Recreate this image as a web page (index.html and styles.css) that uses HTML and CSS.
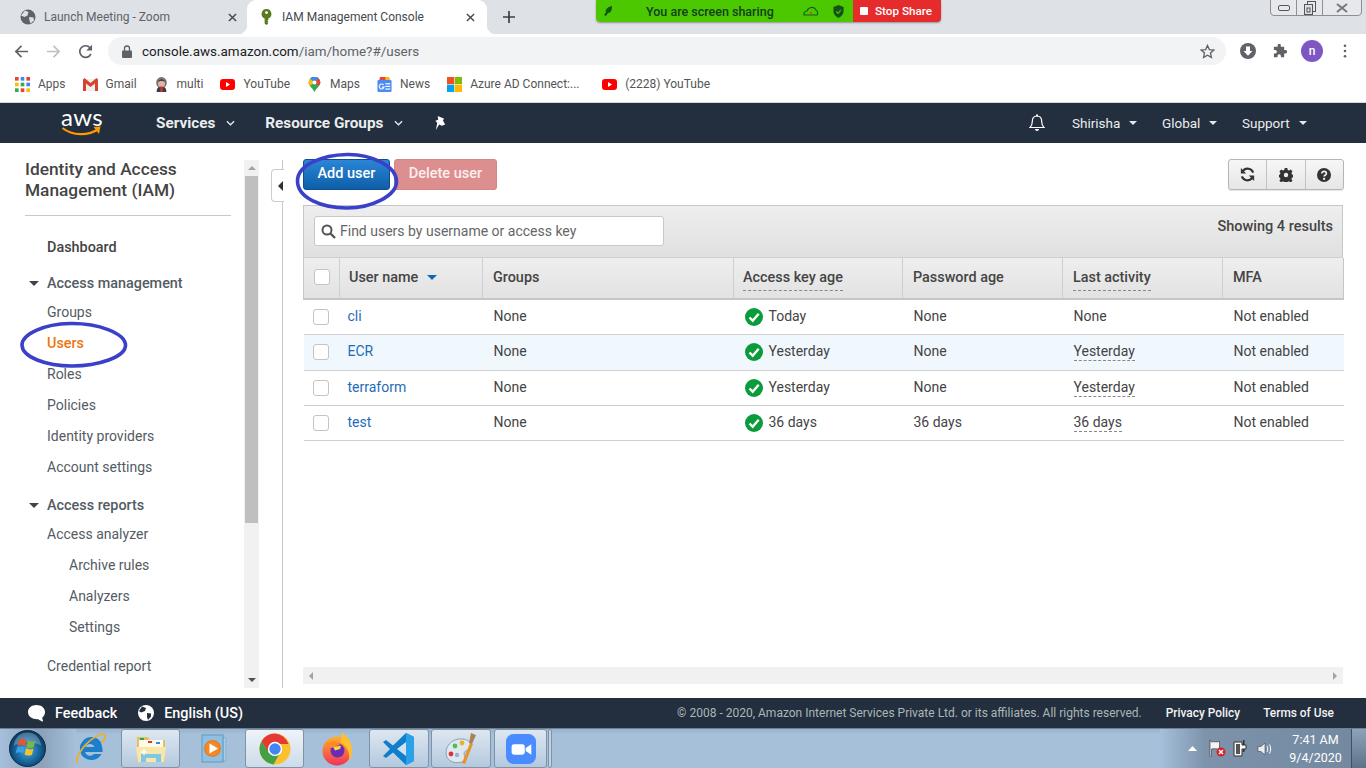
FILE: index.html
```html
<!DOCTYPE html>
<html lang="en">
<head>
<meta charset="utf-8">
<title>IAM Management Console</title>
<link rel="stylesheet" href="styles.css">
</head>
<body>
<div class="screen">

  <header class="tabstrip">
    <div class="tab">
      <svg class="tab-ico" viewBox="0 0 16 16"><circle cx="8" cy="8" r="7.500" fill="#5f6368"/><path d="M5 1.500l3.500 1.500-1 3.500-3 1.500L1 6.500zM9 8l4.500.5.500 3-3.500 3-1-3z" fill="#dee1e6"/></svg>
      <span class="tab-title">Launch Meeting - Zoom</span>
      <svg class="tab-x" viewBox="0 0 10 10"><path d="M1 1l8 8M9 1l-8 8" stroke="#45494d" stroke-width="1.600"/></svg>
    </div>
    <div class="tab tab-active">
      <svg class="tab-ico tab-key" viewBox="0 0 11 17"><path d="M5.500 0a5.200 5.200 0 0 1 2 10v1.500l-1 1 1 1-1 1 1 1-2 1.500-2-1.500V10a5.200 5.200 0 0 1 2-10z" fill="#5b7a1e"/><circle cx="5.500" cy="3.800" r="1.500" fill="#fff"/></svg>
      <span class="tab-title">IAM Management Console</span>
      <svg class="tab-x" viewBox="0 0 10 10"><path d="M1 1l8 8M9 1l-8 8" stroke="#45494d" stroke-width="1.600"/></svg>
    </div>
    <svg class="tab-new" viewBox="0 0 12 12"><path d="M6 0v12M0 6h12" stroke="#3c4043" stroke-width="1.700"/></svg>
  </header>

  <div class="winctl">
    <span class="winbtn"><svg viewBox="0 0 12 6" width="12" height="6"><rect x="0.500" y="0.500" width="11" height="5" rx="1.500" fill="none" stroke="#555"/></svg></span>
    <span class="winbtn"><svg viewBox="0 0 12 14" width="12" height="14"><rect x="3.500" y="0.500" width="8" height="10" fill="none" stroke="#555"/><rect x="0.500" y="3.500" width="8" height="10" fill="#dee1e6" stroke="#555"/><rect x="3" y="7" width="3" height="4" fill="none" stroke="#555"/></svg></span>
    <span class="winbtn winbtn-close"><svg viewBox="0 0 12 10" width="12" height="10"><path d="M1 1l10 8M11 1L1 9" stroke="#777" stroke-width="2"/></svg></span>
  </div>

  <div class="sharebar">
    <div class="share-green">
      <svg class="share-leaf" viewBox="0 0 10 10"><path d="M9 0C4 1 2 4 3 6L1 9l2 1 2-3c3 0 4-3 4-7z" fill="#0d5a0d"/></svg>
      <span class="share-text">You are screen sharing</span>
      <svg class="share-cloud" viewBox="0 0 16 12"><path d="M1 10c-.5-2 1-4 3-4 1-4 7-5 9-1 2 1 2 4 1 5z" fill="none" stroke="#14611a" stroke-width="1.200"/><circle cx="8" cy="8" r="1" fill="#e33"/></svg>
      <svg class="share-shield" viewBox="0 0 12 14"><path d="M6 0l5.500 2v5c0 3-2.500 5.500-5.500 7C3 12.500.5 10 .5 7V2z" fill="#14501a"/><path d="M3.500 7l2 2 3-3.500" stroke="#4bc800" stroke-width="1.300" fill="none"/></svg>
    </div>
    <div class="share-red"><span class="share-stop"></span><span>Stop Share</span></div>
  </div>

  <div class="toolbar">
    <svg class="tb-ico" viewBox="0 0 16 16"><path d="M15 8H2M8 2L2 8l6 6" fill="none" stroke="#5f6368" stroke-width="1.800"/></svg>
    <svg class="tb-ico" viewBox="0 0 16 16"><path d="M1 8h13M8 2l6 6-6 6" fill="none" stroke="#bdc1c6" stroke-width="1.800"/></svg>
    <svg class="tb-ico" viewBox="0 0 16 16"><path d="M13.800 10.500A6.200 6.200 0 1 1 12.800 4" fill="none" stroke="#5f6368" stroke-width="1.800"/><path d="M15 .8v6.200H8.800z" fill="#5f6368"/></svg>
    <div class="omnibox">
      <svg class="lock" viewBox="0 0 10 13"><path d="M2.500 6V3.500a2.500 2.500 0 0 1 5 0V6" fill="none" stroke="#5f6368" stroke-width="1.300"/><rect y="5.500" width="10" height="7.500" rx="1" fill="#5f6368"/></svg>
      <span class="url">console.aws.amazon.com<span class="url-path">/iam/home?#/users</span></span>
      <svg class="star" viewBox="0 0 16 16"><path d="M8 1.500l2 4.400 4.800.5-3.600 3.200 1 4.700L8 11.900l-4.200 2.400 1-4.700L1.200 6.400 6 5.900z" fill="none" stroke="#5f6368" stroke-width="1.400"/></svg>
    </div>
    <svg class="ext-down" viewBox="0 0 16 16"><circle cx="8" cy="8" r="8" fill="#5f6368"/><path d="M6 3.500h4V8h2.500L8 12.800 3.500 8H6z" fill="#fff"/></svg>
    <svg class="ext-puzzle" viewBox="0 0 16 16"><path d="M6 1.500a1.700 1.700 0 0 1 3.400 0V3H13v3.500h1.300a1.800 1.800 0 0 1 0 3.600H13V14H9.500v-1.300a1.800 1.800 0 0 0-3.600 0V14H2v-3.800h1.300a1.900 1.900 0 0 0 0-3.800H2V3h4z" fill="#5f6368"/></svg>
    <span class="avatar">n</span>
    <svg class="kebab" viewBox="0 0 4 16"><circle cx="2" cy="2" r="1.500" fill="#5f6368"/><circle cx="2" cy="8" r="1.500" fill="#5f6368"/><circle cx="2" cy="14" r="1.500" fill="#5f6368"/></svg>
  </div>

  <nav class="bookmarks">
    <a class="bm">
      <svg class="bm-ico" viewBox="0 0 14 14"><g><rect width="3.400" height="3.400" fill="#ea4335"/><rect x="5.300" width="3.400" height="3.400" fill="#4285f4"/><rect x="10.600" width="3.400" height="3.400" fill="#ea4335"/><rect y="5.300" width="3.400" height="3.400" fill="#fbbc04"/><rect x="5.300" y="5.300" width="3.400" height="3.400" fill="#34a853"/><rect x="10.600" y="5.300" width="3.400" height="3.400" fill="#4285f4"/><rect y="10.600" width="3.400" height="3.400" fill="#34a853"/><rect x="5.300" y="10.600" width="3.400" height="3.400" fill="#ea4335"/><rect x="10.600" y="10.600" width="3.400" height="3.400" fill="#fbbc04"/></g></svg>
      <span>Apps</span></a>
    <a class="bm">
      <svg class="bm-ico" viewBox="0 0 15 13"><rect x="1" y="1" width="13" height="12" fill="#f0eeee"/><path d="M0 1.500V13h3V5.500l4.500 3.500L12 5.500V13h3V1.500L13.500 0 7.500 5 1.500 0z" fill="#d4452f"/></svg>
      <span>Gmail</span></a>
    <a class="bm">
      <svg class="bm-ico" viewBox="0 0 15 17"><ellipse cx="7.500" cy="6.500" rx="6" ry="6.500" fill="#7b6a6a"/><ellipse cx="7.500" cy="7" rx="4" ry="5" fill="#dcb6a2"/><path d="M3.500 6c0-5 8-5 8 0-2-2-6-2-8 0z" fill="#45414a"/><path d="M2 17c0-5 2-6 5.500-6S13 12 13 17z" fill="#3d3b44"/><rect x="6.300" y="11" width="2.400" height="6" fill="#d33"/></svg>
      <span>multi</span></a>
    <a class="bm">
      <svg class="bm-ico" viewBox="0 0 15 15"><rect y="2" width="15" height="11" rx="3" fill="#f00"/><path d="M6 5l4 2.500L6 10z" fill="#fff"/></svg>
      <span>YouTube</span></a>
    <a class="bm">
      <svg class="bm-ico" viewBox="0 0 14 18"><path d="M7 18C5 13 0 11 0 6.500a7 7 0 0 1 14 0C14 11 9 13 7 18z" fill="#34a853"/><path d="M2 2L7 6.500 12 1.800A7 7 0 0 0 2 2z" fill="#4285f4"/><path d="M0 6.500C0 8 .6 9 1.500 10.500L7 6.500 2 2A7 7 0 0 0 0 6.500z" fill="#fbbc04"/><path d="M12 1.800L7 6.500l5 4C13.300 9 14 8 14 6.500a7 7 0 0 0-2-4.700z" fill="#ea4335"/><circle cx="7" cy="6.500" r="2.400" fill="#fff"/></svg>
      <span>Maps</span></a>
    <a class="bm">
      <svg class="bm-ico" viewBox="0 0 16 17"><path d="M2 4l1-4h10l1 4z" fill="#ea4335"/><path d="M9 0h4l1 4H9z" fill="#fbbc04"/><rect y="3.500" width="16" height="13.500" rx="1.500" fill="#4a8af4"/><rect x="9" y="7" width="5.500" height="1.300" fill="#fff"/><rect x="9" y="10" width="5.500" height="1.300" fill="#fff"/><rect x="9" y="13" width="5.500" height="1.300" fill="#fff"/><path d="M7 9a2.800 2.800 0 1 0 .5 2.500H5" fill="none" stroke="#fff" stroke-width="1.200"/></svg>
      <span>News</span></a>
    <a class="bm bm-azure">
      <svg class="bm-ico" viewBox="0 0 16 16"><rect width="7.700" height="7.700" fill="#f25022"/><rect x="8.300" width="7.700" height="7.700" fill="#7fba00"/><rect y="8.300" width="7.700" height="7.700" fill="#00a4ef"/><rect x="8.300" y="8.300" width="7.700" height="7.700" fill="#ffb900"/></svg>
      <span>Azure AD Connect:...</span></a>
    <a class="bm">
      <svg class="bm-ico" viewBox="0 0 15 15"><rect y="2" width="15" height="11" rx="3" fill="#f00"/><path d="M6 5l4 2.500L6 10z" fill="#fff"/></svg>
      <span>(2228) YouTube</span></a>
  </nav>

  <div class="awsnav">
    <div class="awslogo">
      <span class="awslogo-text">aws</span>
      <svg class="awslogo-smile" viewBox="0 0 40 11"><path d="M1 2c10 8 26 8 36 1" fill="none" stroke="#f90" stroke-width="2.200"/><path d="M32 1l7-.5L37.500 8z" fill="#f90"/></svg>
    </div>
    <a class="navmenu navmenu-services">Services<svg class="chev" viewBox="0 0 10 6"><path d="M1 1l4 4 4-4" fill="none" stroke="#e5e7e9" stroke-width="1.500"/></svg></a>
    <a class="navmenu navmenu-groups">Resource Groups<svg class="chev" viewBox="0 0 10 6"><path d="M1 1l4 4 4-4" fill="none" stroke="#e5e7e9" stroke-width="1.500"/></svg></a>
    <svg class="navpin" viewBox="0 0 14 16"><path d="M4 0l7 3-1.500 1.500L12 9 8.500 10.500 5.500 9 2 15 3.500 7.500 1.500 5l3-1z" fill="#fff"/></svg>
    <span class="navspacer"></span>
    <svg class="navbell" viewBox="0 0 16 18"><path d="M8 2c-3.500 0-4.700 2.500-4.700 5.500 0 3-1 4.700-2.300 6h14c-1.300-1.300-2.300-3-2.300-6C12.700 4.500 11.500 2 8 2z" fill="none" stroke="#fff" stroke-width="1.200"/><rect x="7" y="0.500" width="2" height="2" fill="#fff"/><path d="M6 15h4c0 2.500-4 2.500-4 0z" fill="#fff"/></svg>
    <a class="navright navright-user">Shirisha<span class="caret"></span></a>
    <a class="navright navright-global">Global<span class="caret"></span></a>
    <a class="navright">Support<span class="caret"></span></a>
  </div>

  <div class="console">
    <aside class="sidebar">
      <div class="sidenav">
        <h1 class="side-title">Identity and Access Management (IAM)</h1>
        <a class="side-dash">Dashboard</a>
        <div class="side-group"><span class="side-caret"></span>Access management</div>
        <a class="side-link side-link-first">Groups</a>
        <a class="side-link side-active">Users</a>
        <a class="side-link">Roles</a>
        <a class="side-link">Policies</a>
        <a class="side-link">Identity providers</a>
        <a class="side-link">Account settings</a>
        <div class="side-group side-group-2"><span class="side-caret"></span>Access reports</div>
        <a class="side-link side-link-first">Access analyzer</a>
        <a class="side-link side-sub">Archive rules</a>
        <a class="side-link side-sub">Analyzers</a>
        <a class="side-link side-sub">Settings</a>
        <a class="side-link side-cred">Credential report</a>
      </div>
      <div class="vscroll">
        <span class="vs-arrow vs-up"></span>
        <span class="vs-thumb"></span>
        <span class="vs-arrow vs-down"></span>
      </div>
    </aside>

    <main class="main">
      <div class="collapse"><span class="collapse-arrow"></span></div>
      <div class="actions">
        <button class="btn btn-primary">Add user</button>
        <button class="btn btn-danger">Delete user</button>
        <span class="actions-spacer"></span>
        <div class="btngroup">
          <span class="gbtn"><svg viewBox="0 0 14 14" width="15" height="15"><path d="M12.300 5.200A5.600 5.600 0 0 0 2.800 3.500M1.700 8.800a5.600 5.600 0 0 0 9.500 1.700" fill="none" stroke="#333" stroke-width="2"/><path d="M.8 1v5h5zM13.200 13V8h-5z" fill="#333"/></svg></span>
          <span class="gbtn"><svg viewBox="0 0 14 14" width="14" height="14"><path d="M5.700 0h2.600l.4 2 1.300.6 1.800-1 1.700 1.800-1.100 1.700.6 1.400 2 .3v2.400l-2 .4-.6 1.300 1.100 1.800-1.700 1.700-1.800-1.100-1.300.6-.4 2H5.700l-.4-2-1.400-.6-1.700 1.100L.4 12.700l1.100-1.800-.6-1.300-1.900-.4V6.800l1.900-.3.600-1.400-1.100-1.700 1.800-1.800 1.700 1 1.400-.6z" fill="#333"/><circle cx="7" cy="7" r="2.200" fill="#eee"/></svg></span>
          <span class="gbtn"><svg viewBox="0 0 14 14" width="14" height="14"><circle cx="7" cy="7" r="7" fill="#333"/><path d="M4.800 5.400C4.800 2.600 9.400 2.600 9.400 5.400c0 1.800-2.300 1.800-2.300 3.200" fill="none" stroke="#eee" stroke-width="1.700"/><rect x="6.100" y="9.800" width="2" height="2" fill="#eee"/></svg></span>
        </div>
      </div>

      <section class="panel">
        <div class="filterbar">
          <div class="search">
            <svg class="search-ico" viewBox="0 0 15 15"><circle cx="6" cy="6" r="4.500" fill="none" stroke="#555" stroke-width="2"/><path d="M9.500 9.500l4.500 4.500" stroke="#555" stroke-width="2.400"/></svg>
            <span>Find users by username or access key</span>
          </div>
          <span class="results">Showing 4 results</span>
        </div>
        <table class="users">
          <colgroup>
            <col class="col-check"><col class="col-name"><col class="col-groups"><col class="col-key"><col class="col-pass"><col class="col-last"><col class="col-mfa">
          </colgroup>
          <thead>
            <tr>
              <th class="cell-check"><span class="cbox"></span></th>
              <th class="th-tight">User name<span class="sort"></span></th>
              <th>Groups</th>
              <th class="th-tight"><span class="dash">Access key age</span></th>
              <th>Password age</th>
              <th><span class="dash">Last activity</span></th>
              <th>MFA</th>
            </tr>
          </thead>
          <tbody>
            <tr>
              <td class="cell-check"><span class="cbox"></span></td>
              <td class="td-name"><a class="ulink">cli</a></td>
              <td>None</td>
              <td class="td-key"><span class="keyage"><svg class="ok" viewBox="0 0 18 18"><circle cx="9" cy="9" r="9" fill="#0a9b3a"/><path d="M4.500 9.500l3.200 3.200 6-7" fill="none" stroke="#fff" stroke-width="2.400"/></svg>Today</span></td>
              <td>None</td>
              <td>None</td>
              <td>Not enabled</td>
            </tr>
            <tr class="row-hi">
              <td class="cell-check"><span class="cbox"></span></td>
              <td class="td-name"><a class="ulink">ECR</a></td>
              <td>None</td>
              <td class="td-key"><span class="keyage"><svg class="ok" viewBox="0 0 18 18"><circle cx="9" cy="9" r="9" fill="#0a9b3a"/><path d="M4.500 9.500l3.200 3.200 6-7" fill="none" stroke="#fff" stroke-width="2.400"/></svg>Yesterday</span></td>
              <td>None</td>
              <td><span class="dash">Yesterday</span></td>
              <td>Not enabled</td>
            </tr>
            <tr>
              <td class="cell-check"><span class="cbox"></span></td>
              <td class="td-name"><a class="ulink">terraform</a></td>
              <td>None</td>
              <td class="td-key"><span class="keyage"><svg class="ok" viewBox="0 0 18 18"><circle cx="9" cy="9" r="9" fill="#0a9b3a"/><path d="M4.500 9.500l3.200 3.200 6-7" fill="none" stroke="#fff" stroke-width="2.400"/></svg>Yesterday</span></td>
              <td>None</td>
              <td><span class="dash">Yesterday</span></td>
              <td>Not enabled</td>
            </tr>
            <tr>
              <td class="cell-check"><span class="cbox"></span></td>
              <td class="td-name"><a class="ulink">test</a></td>
              <td>None</td>
              <td class="td-key"><span class="keyage"><svg class="ok" viewBox="0 0 18 18"><circle cx="9" cy="9" r="9" fill="#0a9b3a"/><path d="M4.500 9.500l3.200 3.200 6-7" fill="none" stroke="#fff" stroke-width="2.400"/></svg>36 days</span></td>
              <td>36 days</td>
              <td><span class="dash">36 days</span></td>
              <td>Not enabled</td>
            </tr>
          </tbody>
        </table>
      </section>

      <div class="hscroll"><span class="hs-left"></span><span class="hs-right"></span></div>
    </main>
  </div>

  <footer class="awsfoot">
    <svg class="foot-bubble" viewBox="0 0 18 18"><path d="M9 0c5 0 9 3 9 7.500 0 3-1.500 5-3 6l1 4c-2-.5-4-1.500-5-2.500-6 .5-11-2.500-11-7.500C0 3 4 0 9 0z" fill="#fff"/></svg>
    <a class="foot-strong">Feedback</a>
    <svg class="foot-globe" viewBox="0 0 16 16"><circle cx="8" cy="8" r="8" fill="#fff"/><path d="M4 1.500L8 3 7 6 3 7.500 1 6zM9 8l4 .5 0 3L10 15 9 12z" fill="#232f3e"/></svg>
    <a class="foot-strong">English (US)</a>
    <span class="foot-spacer"></span>
    <span class="foot-copy">© 2008 - 2020, Amazon Internet Services Private Ltd. or its affiliates. All rights reserved.</span>
    <a class="foot-link foot-link-privacy">Privacy Policy</a>
    <a class="foot-link">Terms of Use</a>
  </footer>

  <div class="taskbar">
    <div class="orb">
      <svg viewBox="0 0 38 38" width="37" height="37"><defs><radialGradient id="orbg" cx="50%" cy="55%" r="60%"><stop offset="0" stop-color="#3fa7de"/><stop offset=".6" stop-color="#145f94"/><stop offset="1" stop-color="#08263f"/></radialGradient></defs><circle cx="19" cy="19" r="18.500" fill="url(#orbg)" stroke="#0c2c48"/><path d="M5 16C6 7 12 2.500 19 2.500S32 7 33 16C24 11 14 11 5 16z" fill="#fff" fill-opacity=".25"/><path d="M10.500 10c2.700-1.300 5-1 7.500.4l-1.500 6.300c-2.600-1.400-5-1.700-7.800-.4z" fill="#e8542c"/><path d="M19.300 11c2.600 1.400 5 1.500 7.700.1l-1.600 6.400c-2.800 1.400-5.200 1.300-7.600-.1z" fill="#79b93e"/><path d="M8.400 17.500c2.800-1.300 5.200-1 7.800.4l-1.500 6.300c-2.700-1.400-5-1.700-7.900-.4z" fill="#3a9fe3"/><path d="M17.500 18.800c2.500 1.400 5 1.500 7.700.1l-1.600 6.400c-2.800 1.400-5.200 1.300-7.600-.1z" fill="#f6c02c"/></svg>
    </div>
    <span class="task task-plain task-ie">
      <svg viewBox="0 0 34 34" width="34" height="34"><path d="M26 9a11.500 11.500 0 1 0 1.500 13H20c-3 3-8 2-9-2h17.500c.4-4-.8-8-2.500-11zM11.500 15c1-4 7.700-4 8.800 0z" fill="#1d7fcb"/><path d="M3.500 31C.5 26 11 8 27 2.500c5.500-1.500 5 4 1 8.500" fill="none" stroke="#eeb028" stroke-width="1.800"/></svg>
    </span>
    <span class="task task-btn task-folder">
      <svg viewBox="0 0 32 32" width="32" height="32"><path d="M2 4h11l2 3h15v21H2z" fill="#e3c066"/><path d="M4 7h24v10H4z" fill="#fffbe8"/><rect x="5" y="5" width="4" height="2" fill="#2aa84a"/><rect x="13" y="8" width="4" height="2" fill="#d33"/><rect x="21" y="9" width="4" height="2" fill="#2b8fd8"/><path d="M1 14h30l-2 15H3z" fill="#f7e7a8"/><path d="M6 21h20v8h-5v-4H11v4H6z" fill="#7ec7e6"/><path d="M9 15l1 3 3 1-3 1-1 3-1-3-3-1 3-1z" fill="#fff"/></svg>
    </span>
    <span class="task task-plain task-media">
      <svg viewBox="0 0 32 32" width="32" height="32"><path d="M26 4v24h3V5z" fill="#a9cbe4" stroke="#6fa3c8" stroke-width=".6"/><rect x="5" y="2" width="21" height="27" fill="#8fc0e2" stroke="#5c9ac4"/><circle cx="15.500" cy="15.500" r="8.500" fill="#ee7b1e"/><circle cx="15.500" cy="15.500" r="7" fill="#f48a26"/><path d="M12.500 10.500l8.500 5-8.500 5z" fill="#fff"/></svg>
    </span>
    <span class="task task-btn task-chrome">
      <svg viewBox="0 0 32 32" width="32" height="32"><circle cx="16" cy="16" r="15.500" fill="#fbc02d"/><path d="M16 .5A15.500 15.500 0 0 0 2.600 8.200L9 19l7-8h13.500A15.500 15.500 0 0 0 16 .5z" fill="#e53935"/><path d="M2.600 8.200A15.500 15.500 0 0 0 14.500 31.400L21 20H10z" fill="#43a047"/><circle cx="16" cy="16" r="7.200" fill="#fff"/><circle cx="16" cy="16" r="5.700" fill="#4285f4"/></svg>
    </span>
    <span class="task task-plain task-fox">
      <svg viewBox="0 0 32 34" width="32" height="34"><defs><linearGradient id="foxg" x1="0" y1="0" x2="0" y2="1"><stop offset="0" stop-color="#ffb02a"/><stop offset="1" stop-color="#f0325a"/></linearGradient></defs><circle cx="16" cy="19" r="14.500" fill="url(#foxg)"/><path d="M20 0c7 4 11 11 11 19 0 4-1 7-3 10 1-9-2-15-9-19 2-3 2-7 1-10z" fill="#ffc02e"/><circle cx="16.500" cy="18.500" r="7" fill="#6a2cb5"/><path d="M5 12c3-2 9-3 12-1l3 3c-4-1-7 0-9 2-3-1-5-2-6-4z" fill="#ff8a1f"/><path d="M12 14.500l8-.5-1 3-5 1.500z" fill="#ffd24a"/></svg>
    </span>
    <span class="task task-btn task-code">
      <svg viewBox="0 0 32 32" width="32" height="32"><path d="M23 0l8 4v24l-8 4-13-12.500L3 25l-3-2 7-7-7-7 3-2 7 5.500z" fill="#0f7fcc"/><path d="M23 0l8 4v24l-8 4z" fill="#2aa1ea"/><path d="M23 9l-9 7 9 7z" fill="#cfe2f2"/></svg>
    </span>
    <span class="task task-btn task-paint">
      <svg viewBox="0 0 34 34" width="34" height="34"><path d="M2 21C2 11 11 6 19 7c7 1 9 5 7 9-2 3-5 2-6 5 0 4 3 5 0 8-7 4-18 1-18-8z" fill="#dfe8ee" stroke="#8aa0b2"/><circle cx="7" cy="22" r="2.400" fill="#d33"/><circle cx="11" cy="14" r="2.400" fill="#5b5"/><circle cx="18" cy="11" r="2.400" fill="#e6b02a"/><circle cx="13" cy="23" r="2.200" fill="#8fb4d0"/><path d="M18 31l8-20 3 1-8 20z" fill="#e8922b"/><path d="M25 11l2-10 5 2-4 9z" fill="#a8825a"/></svg>
    </span>
    <span class="task task-btn task-zoom">
      <svg viewBox="0 0 32 32" width="30" height="30"><rect width="32" height="32" rx="8" fill="#4a8cff"/><rect x="6" y="11" width="14" height="11" rx="2.500" fill="#fff"/><path d="M21 15l6-4v11l-6-4z" fill="#fff"/></svg>
    </span>
    <span class="task-sliver"></span>
    <span class="taskbar-fill"></span>
    <div class="tray">
      <svg class="tray-up" viewBox="0 0 9 5"><path d="M0 5l4.500-5 4.500 5z" fill="#fff"/></svg>
      <svg class="tray-flag" viewBox="0 0 17 17"><path d="M1 0v17h1.500V9c4-1 5 1 8-1V1C8 3 6 1 2.500 2z" fill="#f4f4f4" stroke="#444" stroke-width=".7"/><circle cx="12" cy="12" r="4.500" fill="#d3232d"/><path d="M10 10l4 4M14 10l-4 4" stroke="#fff" stroke-width="1.400"/></svg>
      <svg class="tray-plug" viewBox="0 0 14 17"><path d="M1 2h8v3h4v4H9v7H1z" fill="#f6f6f6" stroke="#333"/><rect x="3" y="4" width="4" height="10" fill="#555"/><rect x="10" y="0" width="1.500" height="5" fill="#333"/><rect x="10" y="9" width="1.500" height="3" fill="#333"/></svg>
      <svg class="tray-vol" viewBox="0 0 16 16"><path d="M1 5.500h3L8 2v12L4 10.500H1z" fill="#e8eef3" stroke="#444" stroke-width=".6"/><path d="M10 5c1 2 1 4 0 6M12.500 3.500c1.500 3 1.500 6 0 9" fill="none" stroke="#fff"/></svg>
      <div class="clock"><span>7:41 AM</span><span>9/4/2020</span></div>
      <span class="showdesk"></span>
    </div>
  </div>

  <svg class="ring ring-add" viewBox="0 0 104 58"><path d="M52 2.500C76 2 101 14 101.500 29 102 44 76 56 52 56 27 56 2.500 46 2.500 29 2.500 13 27 3 52 2.500z" fill="none" stroke="#3b40c8" stroke-width="3.600"/></svg>
  <svg class="ring ring-users" viewBox="0 0 108 47"><path d="M50 2.500C78 2 105 12 105.500 24 106 36 78 45 52 45 26 45 2 36 2 24 2 13 24 3 50 2.500z" fill="none" stroke="#3b40c8" stroke-width="3.600"/></svg>
</div>
</body>
</html>
```

FILE: styles.css
```css
* { box-sizing: border-box; }
html, body { margin: 0; padding: 0; }
body { font-family: Roboto, "Liberation Sans", sans-serif; color: #444; background: #fff; }
a { color: inherit; text-decoration: none; }
svg { display: block; flex: none; }

.screen { position: relative; width: 1366px; height: 768px; overflow: hidden; display: flex; flex-direction: column; }

/* Browser tab strip */
.tabstrip { height: 34px; background: #dee1e6; display: flex; align-items: stretch; flex: none; }
.tab { width: 247px; display: flex; align-items: center; padding: 0 10px 0 20px; font-size: 12px; color: #5f6368; }
.tab-active { position: relative; width: 240px; padding: 0 12px 0 14px; background: #fff; color: #45494d; border-radius: 9px 9px 0 0; }
.tab-active::before, .tab-active::after { content: ""; position: absolute; bottom: 0; width: 9px; height: 9px; }
.tab-active::before { left: -9px; background: radial-gradient(circle at 0 0, transparent 9px, #fff 9.500px); }
.tab-active::after { right: -9px; background: radial-gradient(circle at 100% 0, transparent 9px, #fff 9.500px); }
.tab-ico { width: 16px; height: 16px; margin-right: 8px; }
.tab-key { width: 11px; height: 16px; margin-right: 10px; }
.tab-title { flex: 1; }
.tab-x { width: 9px; height: 9px; }
.tab-new { width: 12px; height: 12px; margin: 11px 0 0 16px; }

.winctl { position: absolute; left: 1270px; top: -1px; width: 92px; height: 17px; display: flex; border: 1px solid #8c8f93; border-radius: 0 0 4px 4px; background: #e6e8eb; }
.winbtn { width: 26px; display: flex; align-items: center; justify-content: center; border-right: 1px solid #8c8f93; }
.winbtn-close { flex: 1; border-right: 0; }

.sharebar { position: absolute; left: 596px; top: 0; height: 22px; display: flex; font-size: 12.500px; font-weight: 500; box-shadow: 0 1px 2px rgba(0,0,0,.35); border-radius: 0 0 4px 4px; }
.share-green { width: 257px; background: #4bc800; color: #14401a; display: flex; align-items: center; padding: 0 9px 0 7px; border-radius: 0 0 0 4px; }
.share-leaf { width: 10px; height: 10px; }
.share-text { margin-left: 33px; flex: 1; }
.share-cloud { width: 16px; height: 12px; margin-right: 14px; }
.share-shield { width: 11px; height: 13px; }
.share-red { width: 88px; background: #e52b2b; color: #fff; display: flex; align-items: center; padding-left: 7px; border-radius: 0 0 4px 0; font-size: 11.700px; }
.share-stop { width: 8px; height: 8px; background: #fff; border-radius: 1px; margin-right: 7px; }

/* Toolbar */
.toolbar { height: 34px; background: #fff; display: flex; align-items: center; flex: none; padding-left: 14px; }
.tb-ico { width: 15px; height: 15px; margin-right: 17px; }
.tb-ico:nth-child(3) { margin-right: 15px; }
.omnibox { width: 1118px; height: 28px; border-radius: 14px; background: #f1f3f4; display: flex; align-items: center; padding: 0 11px 0 14px; font-size: 13.450px; color: #202124; }
.lock { width: 10px; height: 13px; margin-right: 10px; }
.url { flex: 1; }
.url-path { color: #5f6368; }
.star { width: 15px; height: 15px; }
.ext-down { width: 16px; height: 16px; margin-left: 14px; }
.ext-puzzle { width: 15px; height: 15px; margin-left: 16px; }
.avatar { width: 22px; height: 22px; margin-left: 14px; border-radius: 50%; background: #7e57c2; color: #fff; font-size: 12px; font-weight: 500; display: flex; align-items: center; justify-content: center; }
.kebab { width: 4px; height: 14px; margin-left: 20px; }

/* Bookmarks */
.bookmarks { height: 35px; flex: none; background: #fff; display: flex; align-items: center; gap: 17px; padding: 0 0 2px 15px; font-size: 12px; color: #555; border-bottom: 1px solid #d5d7da; }
.bm { display: flex; align-items: center; gap: 8px; white-space: nowrap; }
.bm-ico { width: 15px; height: 15px; }
.bm-azure { margin-right: 5px; width: 133px; }

/* AWS nav */
.awsnav { height: 40px; flex: none; background: #232f3e; color: #fff; display: flex; align-items: center; padding: 0 34px 0 61px; }
.awslogo { position: relative; width: 40px; height: 30px; margin-right: 55px; }
.awslogo-text { display: block; font-family: Lato, Roboto, sans-serif; font-size: 24px; line-height: 24px; margin-top: -3px; letter-spacing: .3px; }
.awslogo-smile { position: absolute; left: 0; top: 18px; width: 41px; height: 11px; }
.navmenu { display: flex; align-items: center; font-size: 15.300px; font-weight: 700; color: #eaeded; }
.chev { width: 9px; height: 6px; margin-left: 11px; }
.navmenu-services { margin-right: 30px; }
.navpin { width: 13px; height: 15px; margin-left: 31px; }
.navspacer { flex: 1; }
.navbell { width: 16px; height: 18px; margin-right: 27px; }
.navright { display: flex; align-items: center; font-size: 13.500px; color: #eaeded; width: 64px; margin-right: 26px; white-space: nowrap; }
.navright-user { width: 66px; margin-right: 24px; }
.navright-global { width: 56px; margin-right: 24px; }
.caret { width: 0; height: 0; border: 4px solid transparent; border-top: 4px solid #e5e7e9; border-bottom: 0; margin-left: 9px; }

/* Console body */
.console { height: 555px; flex: none; display: flex; align-items: flex-start; padding-top: 17px; background: #fff; }
.sidebar { width: 259px; height: 528px; flex: none; display: flex; }
.sidenav { flex: 1; font-size: 14px; color: #545b64; display: flex; flex-direction: column; align-items: flex-start; }
.side-title { font-size: 17.300px; font-weight: 500; line-height: 21px; color: #444; margin: -1px 13px 0 25px; padding-bottom: 14px; border-bottom: 1px solid #c8c8c8; width: 206px; }
.side-dash { margin: 23px 0 0 47px; font-size: 14.400px; font-weight: 500; color: #444; line-height: 17px; }
.side-group { margin: 19px 0 0 29px; font-size: 14.400px; font-weight: 500; color: #545b64; line-height: 17px; display: flex; align-items: center; }
.side-group-2 { margin-top: 14px; }
.side-caret { width: 0; height: 0; border: 5px solid transparent; border-top: 5px solid #444; border-bottom: 0; margin-right: 8px; }
.side-link { height: 31px; line-height: 31px; margin-left: 47px; flex: none; }
.side-link-first { margin-top: 5px; }
.side-active { color: #eb7711; font-weight: 500; font-size: 14.400px; }
.side-sub { margin-left: 69px; }
.side-cred { margin-top: 8px; }
.vscroll { width: 15px; height: 528px; background: #f1f1f1; display: flex; flex-direction: column; align-items: center; flex: none; position: relative; }
.vs-thumb { width: 13px; height: 347px; background: #bfbfbf; margin-top: 6px; }
.vs-arrow { width: 0; height: 0; border: 4px solid transparent; }
.vs-up { border-bottom: 4px solid #a3a3a3; border-top: 0; margin-top: 6px; }
.vs-down { border-top: 4px solid #505050; border-bottom: 0; margin-top: auto; margin-bottom: 6px; }

.main { position: relative; margin-left: 23px; width: 1061px; height: 528px; border-left: 1px solid #c8c8c8; padding-left: 20px; display: flex; flex-direction: column; }
.collapse { position: absolute; left: -12px; top: 9px; width: 13px; height: 33px; background: #fff; border: 1px solid #ccc; border-right: 0; border-radius: 4px 0 0 4px; display: flex; align-items: center; justify-content: center; }
.collapse-arrow { width: 0; height: 0; border: 5px solid transparent; border-right: 5px solid #333; border-left: 0; margin-left: 4px; }

.actions { height: 31px; flex: none; display: flex; gap: 4px; margin: -1px -1px 0 0; }
.btn { height: 31px; border-radius: 3px; font: 500 14.500px Roboto, sans-serif; color: #fff; padding: 0 0 2px; }
.btn-primary { width: 87px; background: linear-gradient(#2a86d6, #0f5ea8); border: 1px solid #0d4f8e; }
.btn-danger { width: 103px; background: #dd8f90; border: 1px solid #d78485; color: #fbeeee; }
.actions-spacer { flex: 1; }
.btngroup { display: flex; height: 31px; width: 116px; border: 1px solid #b5b5b5; border-radius: 3px; background: linear-gradient(#f6f6f6, #e6e6e6); box-shadow: 0 1px 1px rgba(0,0,0,.1); }
.gbtn { flex: 1; display: flex; align-items: center; justify-content: center; border-left: 1px solid #c2c2c2; }
.gbtn:first-child { border-left: 0; }

.panel { margin-top: 15px; width: 1040px; flex: none; }
.filterbar { height: 53px; display: flex; align-items: flex-start; padding: 10px 9px 0 10px; background: linear-gradient(#eeeeee, #e0e0e0); border: 1px solid #c6c6c6; border-bottom: 1px solid #cfcfcf; justify-content: space-between; }
.search { width: 350px; height: 30px; background: #fff; border: 1px solid #c8c8c8; border-radius: 3px; display: flex; align-items: center; padding-left: 6px; gap: 4px; font-size: 14px; color: #666; }
.search-ico { width: 15px; height: 15px; }
.results { font-size: 14.500px; font-weight: 500; color: #444; margin-top: 2px; }

.users { width: 1040px; border-collapse: collapse; table-layout: fixed; font-size: 14px; color: #444; }
.col-check { width: 36px; }
.col-name { width: 143px; }
.col-groups { width: 251px; }
.col-key { width: 169px; }
.col-pass { width: 160px; }
.col-last { width: 160px; }
.col-mfa { width: 121px; }
.users th { height: 41px; padding: 12px 0 0 10px; vertical-align: top; line-height: 16px; text-align: left; font-size: 14.400px; font-weight: 500; color: #444; background: linear-gradient(#eeeeee, #e2e2e2); border-left: 1px solid #cfcfcf; border-bottom: 2px solid #c6c6c6; white-space: nowrap; }
.users th:first-child { border-left: 1px solid #c6c6c6; }
.users th:last-child { border-right: 1px solid #c6c6c6; }
.users th.th-tight { padding-left: 9px; }
.users th.cell-check { padding-top: 11px; }
.users td { height: 35px; padding: 0 0 2px 11px; border-bottom: 1px solid #cfcfcf; }
.users td.cell-check { padding: 0 0 0 9px; }
.users td.td-name { padding-left: 8px; }
.users td.td-key { padding-left: 11px; }
.users .row-hi td { height: 36px; background: #f0f7fd; }
.cbox { display: block; width: 16px; height: 16px; background: #fff; border: 1px solid #c4c4c4; border-radius: 3px; }
.sort { display: inline-block; width: 0; height: 0; border: 5px solid transparent; border-top: 5px solid #1166bb; border-bottom: 0; margin-left: 9px; vertical-align: 2px; }
.dash { display: inline-block; border-bottom: 1px dashed #888; line-height: 17px; }
th .dash { line-height: 16px; padding-bottom: 4px; }
td .dash { margin-top: 2px; }
.ulink { color: #1e6cb8; }
.keyage { display: flex; align-items: center; gap: 6px; }
.ok { width: 18px; height: 18px; margin-top: 2px; }

.hscroll { margin-top: auto; margin-bottom: 4px; width: 1040px; height: 17px; background: #f1f1f1; display: flex; align-items: center; justify-content: space-between; padding: 0 6px; }
.hs-left { width: 0; height: 0; border: 4px solid transparent; border-right: 4px solid #a3a3a3; border-left: 0; }
.hs-right { width: 0; height: 0; border: 4px solid transparent; border-left: 4px solid #a3a3a3; border-right: 0; }

/* AWS footer */
.awsfoot { height: 30px; flex: none; background: #232f3e; color: #f2f3f3; display: flex; align-items: center; padding: 0 32px 0 28px; font-size: 11.900px; }
.foot-bubble { width: 17px; height: 17px; margin-right: 10px; }
.foot-strong { font-size: 14.400px; font-weight: 500; color: #fff; }
.foot-globe { width: 16px; height: 16px; margin: 0 10px 0 21px; }
.foot-spacer { flex: 1; }
.foot-copy { font-size: 12px; color: #aab7b8; }
.foot-link { font-weight: 500; color: #f2f3f3; }
.foot-link-privacy { margin: 0 23px 0 24px; }

/* Windows taskbar */
.taskbar { height: 40px; flex: none; background: linear-gradient(#99b2cd, #a7c0da 15%); border-top: 1px solid #6d8196; display: flex; align-items: center; position: relative; }
.orb { width: 76px; height: 39px; padding-left: 9px; flex: none; background: linear-gradient(90deg, #a6bfda, #8ba2bb 55%, #a6bfda); display: flex; align-items: center; }
.task { height: 39px; display: flex; align-items: center; justify-content: center; flex: none; }
.task-btn { border: 1px solid #7f92a6; border-radius: 3px; background: linear-gradient(#dde7f1, #b4c9de); }
.task-ie { width: 30px; margin-right: 15px; }
.task-folder { width: 59px; }
.task-media { width: 65px; }
.task-chrome { width: 59px; background: linear-gradient(#eef3f8, #cddbea); }
.task-fox { width: 65px; }
.task-code { width: 60px; }
.task-paint { width: 60px; margin-left: 2px; }
.task-zoom { width: 53px; margin-left: 3px; }
.task-sliver { width: 4px; height: 39px; border: 1px solid #7f92a6; border-radius: 2px; margin-left: 1px; background: #c4d4e4; }
.taskbar-fill { flex: 1; }
.tray { width: 206px; height: 39px; display: flex; align-items: center; padding-left: 28px; background: linear-gradient(90deg, #a6bfda, #7c93ab 22%, #71889f); color: #fff; }
.tray-up { width: 9px; height: 5px; }
.tray-flag { width: 17px; height: 17px; margin-left: 12px; }
.tray-plug { width: 14px; height: 17px; margin-left: 7px; }
.tray-vol { width: 16px; height: 16px; margin-left: 10px; }
.clock { margin-left: 19px; width: 47px; display: flex; flex-direction: column; align-items: center; font-size: 12.500px; line-height: 18px; color: #fff; white-space: nowrap; }
.showdesk { margin-left: auto; width: 15px; height: 39px; background: linear-gradient(#8da3ba, #5e7389); border-left: 1px solid #40505f; }

/* Hand-drawn annotations over the screenshot */
.ring { position: absolute; }
.ring-add { left: 295px; top: 152px; width: 104px; height: 58px; }
.ring-users { left: 20px; top: 321px; width: 108px; height: 47px; }
```
